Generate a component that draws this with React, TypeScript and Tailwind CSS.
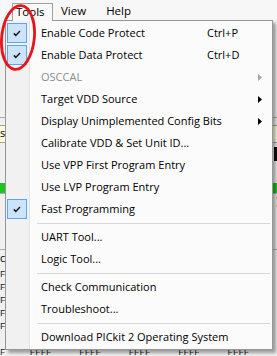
import React from 'react';

type MenuEntry =
  | { kind: 'item'; label: string; checked?: boolean; shortcut?: string; submenu?: boolean; disabled?: boolean }
  | { kind: 'sep' };

const entries: MenuEntry[] = [
  { kind: 'item', label: 'Enable Code Protect', checked: true, shortcut: 'Ctrl+P' },
  { kind: 'item', label: 'Enable Data Protect', checked: true, shortcut: 'Ctrl+D' },
  { kind: 'item', label: 'OSCCAL', submenu: true, disabled: true },
  { kind: 'item', label: 'Target VDD Source', submenu: true },
  { kind: 'item', label: 'Display Unimplemented Config Bits', submenu: true },
  { kind: 'item', label: 'Calibrate VDD & Set Unit ID...' },
  { kind: 'item', label: 'Use VPP First Program Entry' },
  { kind: 'item', label: 'Use LVP Program Entry' },
  { kind: 'item', label: 'Fast Programming', checked: true },
  { kind: 'sep' },
  { kind: 'item', label: 'UART Tool...' },
  { kind: 'item', label: 'Logic Tool...' },
  { kind: 'sep' },
  { kind: 'item', label: 'Check Communication' },
  { kind: 'item', label: 'Troubleshoot...' },
  { kind: 'sep' },
  { kind: 'item', label: 'Download PICkit 2 Operating System' },
];

const hexCols = ['FFFF', 'FFFF', 'FFFF', 'FFFF', 'FFFF'];

function CheckBox() {
  return (
    <div className="ml-[1px] w-[20px] h-[20px] border border-[#5ea5ec] bg-[#cce4fa] flex items-center justify-center">
      <svg width="8" height="7" viewBox="0 0 8 7">
        <path d="M0.8 3.4 L2.8 5.4 L7 1" fill="none" stroke="#1a1a1a" strokeWidth="1.5" />
      </svg>
    </div>
  );
}

// address column of the memory grid, only its last char peeks out left of the menu
function AddrRow() {
  return <div className="h-[13px] leading-[13px] font-['Liberation_Mono',monospace] text-[9px] text-[#202020]">F</div>;
}

export default function App() {
  return (
    <div className="relative w-[277px] h-[356px] overflow-hidden bg-[#f0f0f0] font-['Segoe_UI','Open_Sans','Noto_Sans',sans-serif] text-[11px] text-black">
      {/* application window behind the menu */}
      <div className="flex flex-col h-full">
        <div className="h-[20px] shrink-0 flex items-start bg-[#f7f7f7] text-[11.5px]">
          <div className="relative z-20 shrink-0 ml-[12px] mt-[3px] h-[18px] w-[41px] border border-b-0 border-[#a0a0a0] bg-[#f8f8f8] pl-[3px] leading-[16px]">
            Tools
          </div>
          <span className="ml-[8px] mt-[3px] leading-[16px]">View</span>
          <span className="ml-[20px] mt-[3px] leading-[16px]">Help</span>
        </div>
        <div className="h-[97px] shrink-0" />
        <div className="h-[8px] shrink-0 border-t border-[#a8a8a8]" />
        <div className="h-[18px] shrink-0 bg-[#ffffe1] border-y border-[#a0a0a0] leading-[14px]">s</div>
        <div className="h-[40px] shrink-0 flex justify-end pt-[4px]">
          <div className="w-[3px] h-[14px] bg-[#111]" />
        </div>
        <div className="h-[10px] shrink-0 bg-[#1fc41f]" />
        <div className="h-[56px] shrink-0 border-t border-[#b0b0b0] flex justify-end">
          <span className="mr-[-2px] leading-[14px] text-[#8a6a00]">)</span>
        </div>
        <div className="h-[17px] shrink-0 border-t border-[#b0b0b0] leading-[16px]">c</div>
        <div className="flex flex-col pt-[3px] shrink-0">
          <AddrRow />
          <AddrRow />
          <AddrRow />
          <AddrRow />
          <AddrRow />
          <div className="h-[14px]" />
          <div className="flex font-['Liberation_Mono',monospace] text-[9px] leading-[10px] text-[#202020]">
            <span className="w-[32px]">F</span>
            {hexCols.map((h, i) => (
              <span key={i} className="w-[53px]">{h}</span>
            ))}
          </div>
        </div>
      </div>

      {/* Tools drop-down */}
      <div className="absolute z-10 left-[5px] top-[20px] w-[268px] border border-[#979797] pt-[1px] pb-[1px] shadow-[3px_3px_3px_rgba(0,0,0,0.35)] bg-[linear-gradient(to_right,#f1f1f1_0,#f1f1f1_23px,#e2e3e3_23px,#e2e3e3_24px,#ffffff_24px,#ffffff_25px,#fbfbfb_25px)]">
        {entries.map((e, i) =>
          e.kind === 'sep' ? (
            <div key={i} className="h-[6px] flex items-center pl-[31px] pr-[2px]">
              <div className="h-[1px] w-full bg-[#d7d7d7]" />
            </div>
          ) : (
            <div key={i} className={`h-[22px] flex items-center ${e.disabled ? 'text-[#8d8d8d]' : ''}`}>
              <div className="w-[24px] h-full shrink-0 flex items-center">{e.checked && <CheckBox />}</div>
              <span className="flex-1 min-w-0 pl-[11px] whitespace-nowrap">{e.label}</span>
              <span className="w-[51px] shrink-0 whitespace-nowrap">{e.shortcut}</span>
              <span className="w-[14px] shrink-0 flex items-center">
                {e.submenu && (
                  <svg width="4" height="7" viewBox="0 0 4 7">
                    <polygon points="0,0 4,3.5 0,7" fill={e.disabled ? '#a6a6a6' : '#000'} />
                  </svg>
                )}
              </span>
            </div>
          )
        )}
      </div>

      {/* red annotation ring */}
      <svg className="absolute z-30 left-0 top-0" width="40" height="76" viewBox="0 0 40 76">
        <ellipse cx="18" cy="37.5" rx="16.3" ry="32" transform="rotate(6 18 37.5)" fill="none" stroke="#e8141b" strokeWidth="2.8" />
      </svg>
    </div>
  );
}
